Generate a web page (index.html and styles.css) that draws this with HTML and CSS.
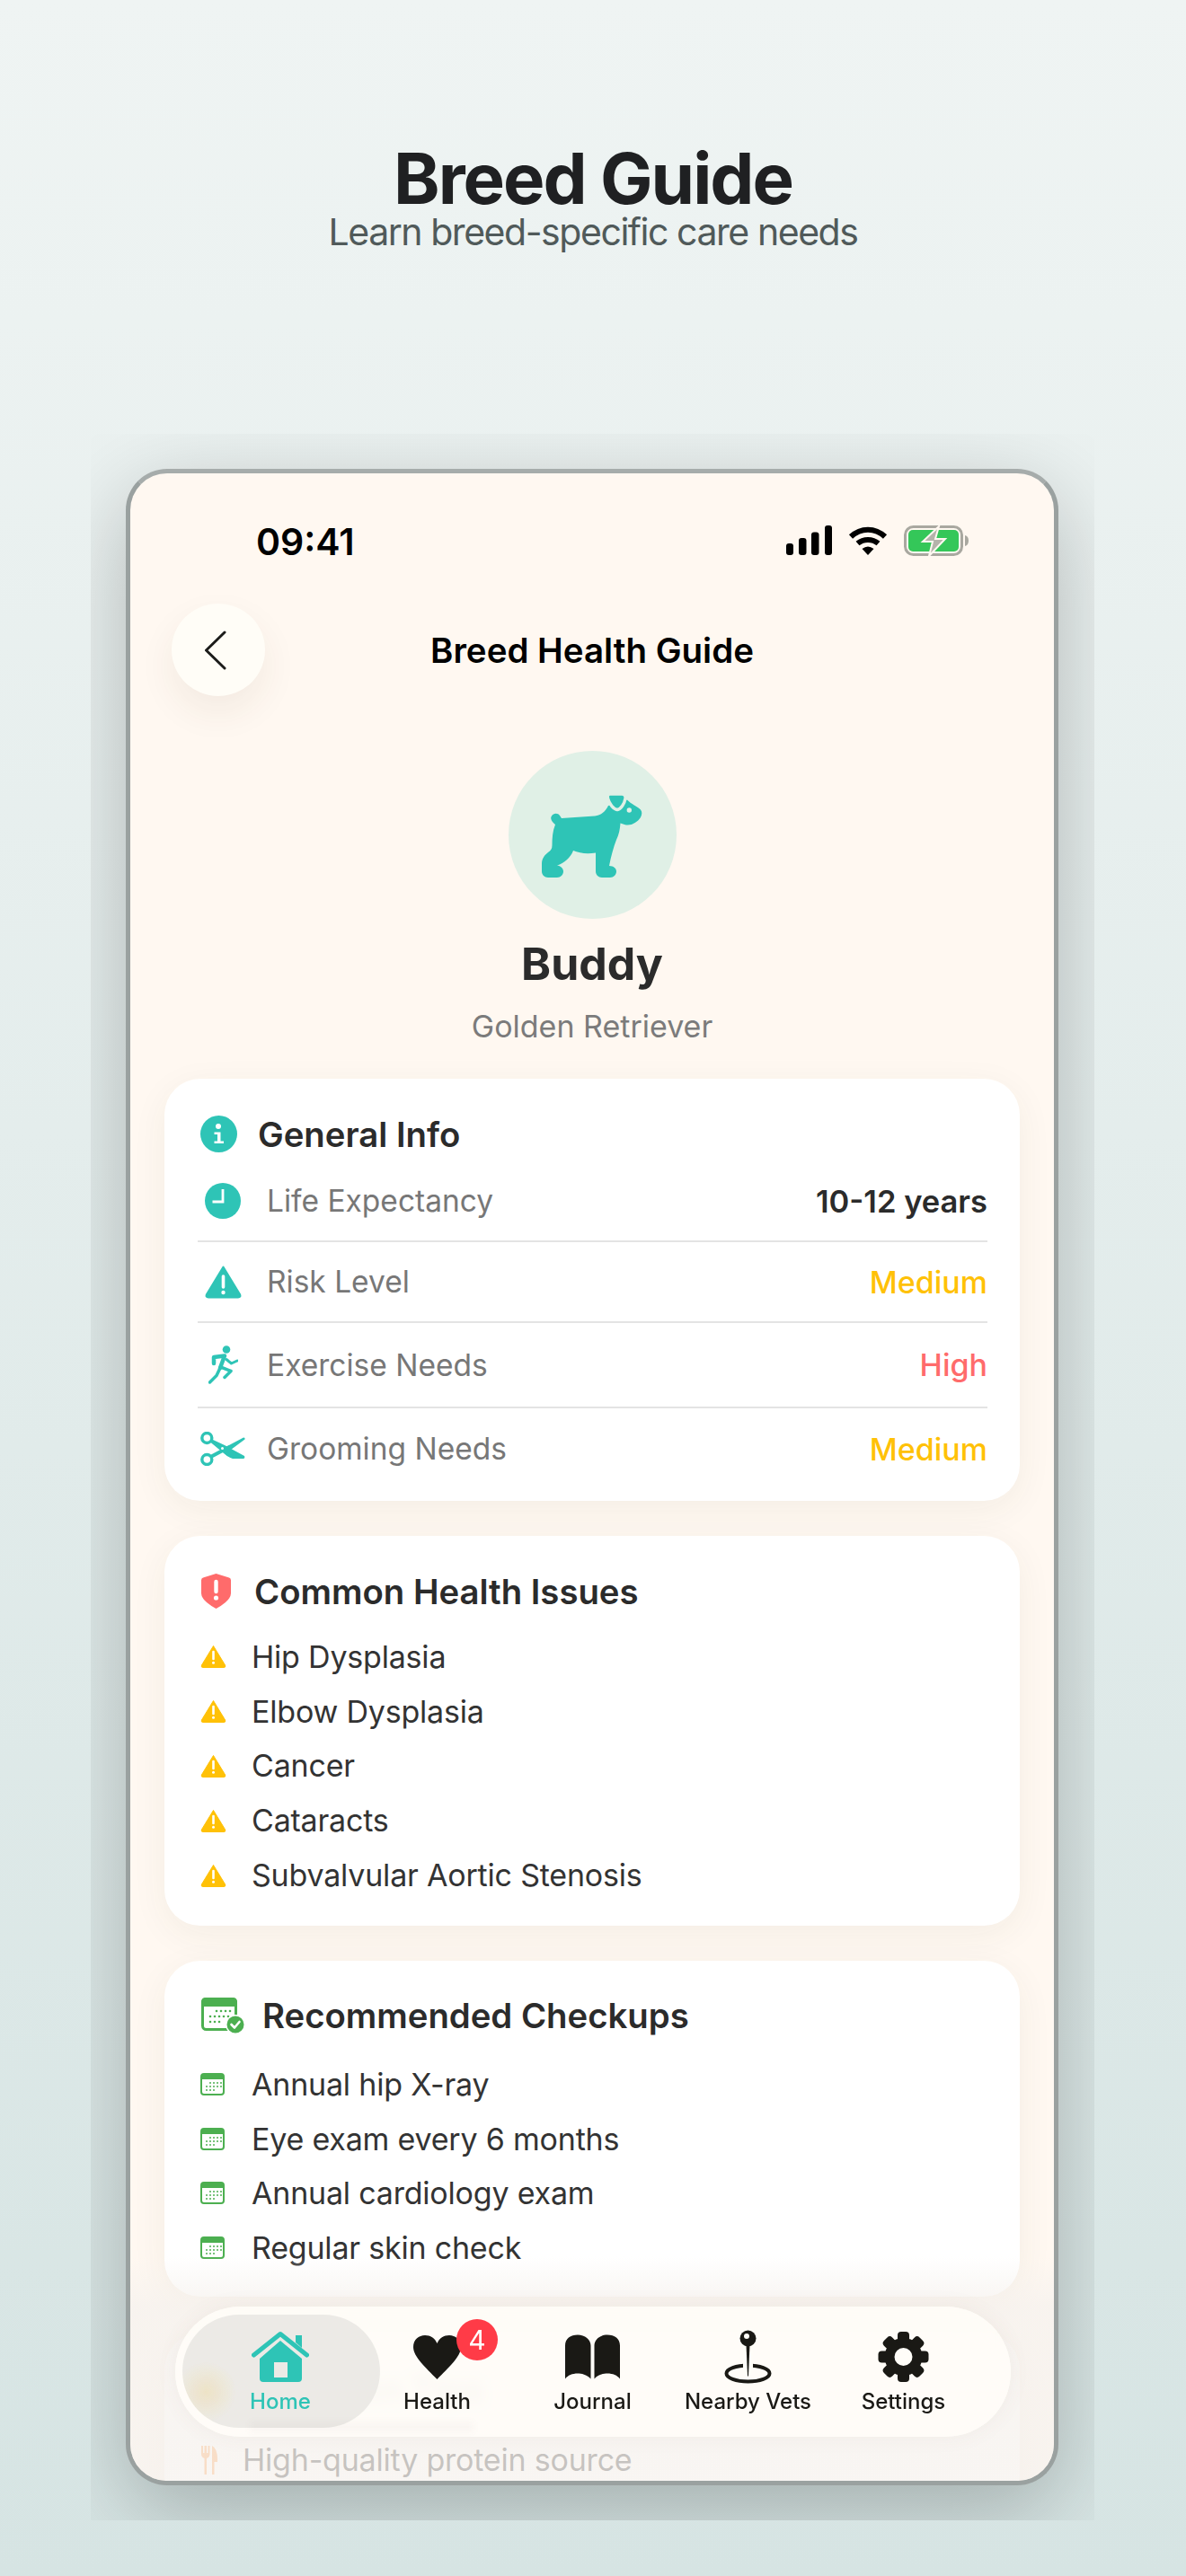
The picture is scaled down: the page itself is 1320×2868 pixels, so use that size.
FILE: index.html
```html
<!DOCTYPE html>
<html lang="en">

<head>
  <meta charset="UTF-8">
  <meta name="viewport" content="width=device-width, initial-scale=1.0">
  <title>Breed Guide</title>
  <link rel="stylesheet" href="styles.css">
</head>

<body>

  <svg class="sprite" aria-hidden="true">
    <symbol id="warn" viewBox="0 0 29 26">
      <path d="M14.5 1.5 L27.6 23 Q28.6 25.5 26 25.5 H3 Q.4 25.5 1.4 23 Z" fill="#ffc107" stroke="#ffc107" stroke-linejoin="round" />
      <path d="M14.5 8 V16" stroke="#fff" stroke-width="2.6" stroke-linecap="round" />
      <circle cx="14.5" cy="20.3" r="1.5" fill="#fff" />
    </symbol>
    <symbol id="cal" viewBox="0 0 27 25">
      <rect x="1" y="1" width="25" height="23" rx="3" fill="#fff" stroke="#4caf50" stroke-width="2" />
      <path d="M1 7 V4 Q1 1 4 1 H23 Q26 1 26 4 V7 Z" fill="#4caf50" />
      <g fill="#4caf50">
        <circle cx="11" cy="11" r="1" /><circle cx="15" cy="11" r="1" /><circle cx="19" cy="11" r="1" /><circle cx="23" cy="11" r="1" />
        <circle cx="7" cy="15" r="1" /><circle cx="11" cy="15" r="1" /><circle cx="15" cy="15" r="1" /><circle cx="19" cy="15" r="1" /><circle cx="23" cy="15" r="1" />
        <circle cx="7" cy="19" r="1" /><circle cx="11" cy="19" r="1" /><circle cx="15" cy="19" r="1" />
      </g>
    </symbol>
  </svg>

  <header class="page-head">
    <h1>Breed Guide</h1>
    <p>Learn breed-specific care needs</p>
  </header>

  <div class="stage">
    <div class="phone">

      <div class="status">
        <span class="time">09:41</span>
        <div class="status-icons">
          <svg width="51" height="33" viewBox="0 0 51 33">
            <rect x="0" y="20" width="8" height="13" rx="3" />
            <rect x="14" y="14" width="8.500" height="19" rx="3" />
            <rect x="28" y="7.500" width="8.500" height="25.500" rx="3" />
            <rect x="43" y="0" width="8" height="33" rx="3" />
          </svg>
          <svg width="44" height="33" viewBox="0 0 44 33">
            <path d="M3 12.500 C14 2,30 2,41 12.500" fill="none" stroke="#000" stroke-width="6" />
            <path d="M10.500 20 C17 14.500,27 14.500,33.500 20" fill="none" stroke="#000" stroke-width="6" />
            <path d="M15.500 26 Q22 21 28.500 26 L22 33 Z" />
          </svg>
          <svg width="73" height="34" viewBox="0 0 73 34">
            <rect x="1.500" y="1.500" width="63" height="31" rx="9" fill="none" stroke="#a9a8a0" stroke-width="3" />
            <rect x="5" y="5" width="56" height="24" rx="5" fill="#34c759" />
            <path d="M68 11 Q72 12 72 17 Q72 22 68 23 Z" fill="#a9a8a0" />
            <path d="M39 1 L21 18 H32 L28 34 L46 15 H35 Z" fill="#b5b3ab" stroke="#fff8f1" stroke-width="2" />
          </svg>
        </div>
      </div>

      <div class="topbar">
        <button class="back" aria-label="Back">
          <svg width="25" height="44" viewBox="0 0 25 44">
            <path d="M23 2 L2.500 22 L23 42" fill="none" stroke="#1c1c1a" stroke-width="3" stroke-linecap="round" stroke-linejoin="round" />
          </svg>
        </button>
        <h2>Breed Health Guide</h2>
      </div>

      <div class="pet">
        <div class="avatar">
          <svg width="112" height="94" viewBox="0 0 112 94">
            <path fill="#2ec4b6" d="M15 35 C11 32,9 28,11 25.500 C13 22,18 22,20 25 L22 28 L59 25.500 C66 25,71 20,74 14 L95 7.500 C99 12,107 15,110 18.500 C112 21,111.500 24,110 27 C106 33,99 37,92 35 L87.500 33.500 C87 40,86 46,83 52 C80 60,77 70,75 81 C80 81,83 84,83 87 C83 91,80 94,76 94 H67 C63 94,60 91,60 87 V66.500 C50 68,42 67,35 64 C32 72,25 78,17 80.500 C21 81,24 84,24 87 C24 91,21 94,17 94 H7 C3 94,0 91,0 87 V79 C0 73,3 69,7 66 C10 64,11.500 62,11.500 58 C11.500 50,12 42,15 35 Z" />
            <path fill="#2ec4b6" stroke="#e0f0e6" stroke-width="3.500" d="M76 1 H89 C92 1,93.500 3,93 6 C92 12,88 18,84 18.500 C80 18,75 12,73.500 6 C73 3,73.500 1,76 1 Z" />
            <circle cx="97.300" cy="19" r="2.700" fill="#e0f0e6" />
          </svg>
        </div>
        <h3>Buddy</h3>
        <p>Golden Retriever</p>
      </div>

      <div class="cards">

        <section class="card">
          <div class="card-head gap-info">
            <svg width="41" height="41" viewBox="0 0 41 41">
              <circle cx="20.500" cy="20.500" r="20.500" fill="#2ec4b6" />
              <circle cx="20" cy="12" r="3" fill="#fff" />
              <path d="M15.500 18.500 H22.500 V28.500 H26 V31 H15.500 V28.500 H19 V21 H15.500 Z" fill="#fff" />
            </svg>
            <h4>General Info</h4>
          </div>
          <div class="info-row">
            <span class="row-icon">
              <svg width="40" height="40" viewBox="0 0 40 40">
                <circle cx="20" cy="20" r="20" fill="#2ec4b6" />
                <path d="M20 7 V21 H8.500" fill="none" stroke="#fff" stroke-width="2.800" />
              </svg>
            </span>
            <span class="row-label">Life Expectancy</span>
            <span class="row-value">10-12 years</span>
          </div>
          <div class="info-row">
            <span class="row-icon">
              <svg width="41" height="37" viewBox="0 0 41 37">
                <path d="M20.500 1.500 L39 32 Q40.500 35.500 37 35.500 H4 Q.5 35.500 2 32 Z" fill="#2ec4b6" stroke="#2ec4b6" stroke-width="2" stroke-linejoin="round" />
                <path d="M20.500 12 V24" stroke="#fff" stroke-width="3.600" stroke-linecap="round" />
                <circle cx="20.500" cy="30" r="2.200" fill="#fff" />
              </svg>
            </span>
            <span class="row-label">Risk Level</span>
            <span class="row-value is-medium">Medium</span>
          </div>
          <div class="info-row row-tall">
            <span class="row-icon">
              <svg width="33" height="43" viewBox="0 0 33 43">
                <circle cx="20" cy="4.500" r="4.300" fill="#2ec4b6" />
                <g fill="none" stroke="#2ec4b6" stroke-linecap="round" stroke-linejoin="round">
                  <path d="M6 20 V13 L18 11.500 L13 25" stroke-width="4.500" />
                  <path d="M20 15.500 L25.500 20 L32 17" stroke-width="3" />
                  <path d="M13 25 L9 33.500 L1.500 41" stroke-width="3.500" />
                  <path d="M13.500 24 L25 28.500 L18 35.500" stroke-width="3.500" />
                </g>
              </svg>
            </span>
            <span class="row-label">Exercise Needs</span>
            <span class="row-value is-high">High</span>
          </div>
          <div class="info-row">
            <span class="row-icon">
              <svg width="50" height="38" viewBox="0 0 50 38">
                <circle cx="7.300" cy="7" r="5.500" fill="none" stroke="#2ec4b6" stroke-width="3.400" />
                <circle cx="7.300" cy="31" r="5.500" fill="none" stroke="#2ec4b6" stroke-width="3.400" />
                <path fill="#2ec4b6" d="M11 26 L26 18 L48 6.500 Q50 6.500 49.500 8.500 L34 20 Q30 22 27 22 L13 29.500 Z" />
                <path fill="#2ec4b6" d="M11 11.500 L13 8.500 L27 15 L49 27 Q50 29.500 48 30 L36 30 Q30 28 26 24 Z" />
                <circle cx="24.500" cy="18.500" r="1.500" fill="#fff" />
              </svg>
            </span>
            <span class="row-label">Grooming Needs</span>
            <span class="row-value is-medium">Medium</span>
          </div>
        </section>

        <section class="card card-list card-issues">
          <div class="card-head gap-issues">
            <svg width="33" height="39" viewBox="0 0 33 39">
              <path d="M16.500 0 L31 4.500 Q33 5 33 7.500 V22 Q33 30 16.500 39 Q0 30 0 22 V7.500 Q0 5 2 4.500 Z" fill="#ff6b6b" />
              <path d="M16.500 9 V20" stroke="#fff" stroke-width="4.400" stroke-linecap="round" />
              <circle cx="16.500" cy="27" r="2.600" fill="#fff" />
            </svg>
            <h4>Common Health Issues</h4>
          </div>
          <ul class="list">
            <li><svg class="li-warn"><use href="#warn" /></svg>Hip Dysplasia</li>
            <li><svg class="li-warn"><use href="#warn" /></svg>Elbow Dysplasia</li>
            <li><svg class="li-warn"><use href="#warn" /></svg>Cancer</li>
            <li><svg class="li-warn"><use href="#warn" /></svg>Cataracts</li>
            <li><svg class="li-warn"><use href="#warn" /></svg>Subvalvular Aortic Stenosis</li>
          </ul>
        </section>

        <section class="card card-list card-checkups">
          <div class="card-head gap-checkups">
            <svg width="49" height="41" viewBox="0 0 49 41">
              <rect x="1.500" y="1.500" width="37" height="34" rx="4" fill="#fff" stroke="#4caf50" stroke-width="3" />
              <path d="M0 10 V5 Q0 0 5 0 H35 Q40 0 40 5 V10 Z" fill="#4caf50" />
              <g fill="#4caf50">
                <circle cx="17" cy="15" r="1.300" /><circle cx="22" cy="15" r="1.300" /><circle cx="27" cy="15" r="1.300" /><circle cx="32" cy="15" r="1.300" />
                <circle cx="10" cy="21" r="1.300" /><circle cx="15" cy="21" r="1.300" /><circle cx="20" cy="21" r="1.300" /><circle cx="25" cy="21" r="1.300" /><circle cx="30" cy="21" r="1.300" />
                <circle cx="10" cy="27" r="1.300" /><circle cx="15" cy="27" r="1.300" /><circle cx="20" cy="27" r="1.300" />
              </g>
              <circle cx="38" cy="30" r="11" fill="#fff" />
              <circle cx="38" cy="30" r="9.500" fill="#4caf50" />
              <path d="M33.500 30 L37 33.500 L42.500 27" fill="none" stroke="#fff" stroke-width="2.600" stroke-linecap="round" stroke-linejoin="round" />
            </svg>
            <h4>Recommended Checkups</h4>
          </div>
          <ul class="list">
            <li><svg class="li-cal"><use href="#cal" /></svg>Annual hip X-ray</li>
            <li><svg class="li-cal"><use href="#cal" /></svg>Eye exam every 6 months</li>
            <li><svg class="li-cal"><use href="#cal" /></svg>Annual cardiology exam</li>
            <li><svg class="li-cal"><use href="#cal" /></svg>Regular skin check</li>
          </ul>
        </section>

        <section class="card card-list card-nutrition">
          <div class="card-head gap-issues">
            <svg width="36" height="41" viewBox="0 0 36 41">
              <path d="M4 0 H32 Q36 0 36 4 V30 L18 41 L0 30 V4 Q0 0 4 0 Z" fill="#ffc107" />
            </svg>
            <h4>Nutrition Tips</h4>
          </div>
          <ul class="list">
            <li>
              <svg class="li-food" viewBox="0 0 19 32">
                <path d="M1 0 V9 Q1 13 4.500 14 V32 H7 V14 Q10.500 13 10.500 9 V0 H8.500 V8 H7 V0 H4.500 V8 H3 V0 Z" fill="#ff9f50" />
                <path d="M13 32 V0 Q19 3 19 15 V18 H15.500 V32 Z" fill="#ff9f50" />
              </svg>High-quality protein source
            </li>
          </ul>
        </section>

      </div>

      <div class="fade"></div>

      <nav class="tabbar">
        <div class="tab-pill"></div>
        <a class="tab is-active">
          <svg width="64" height="56" viewBox="0 0 64 56">
            <path d="M49 4 H56 V18 L49 12 Z" fill="#2ec4b6" />
            <path d="M32 10 L56 30 V52 Q56 56 52 56 H13 Q9 56 9 52 V30 Z M25 34 V51 H40 V34 Z" fill="#2ec4b6" fill-rule="evenodd" />
            <path d="M2.500 26 L32 2.500 L61.500 26" fill="none" stroke="#2ec4b6" stroke-width="5" stroke-linecap="round" stroke-linejoin="round" />
          </svg>
          <span>Home</span>
        </a>
        <a class="tab">
          <span class="tab-health">
            <svg width="53" height="49" viewBox="0 0 53 49">
              <path d="M26.500 49 C14 36,0 24,0 13 C0 5,6 0,13 0 C19 0,24 3,26.500 9 C29 3,34 0,40 0 C47 0,53 5,53 13 C53 24,39 36,26.500 49 Z" fill="#1a1915" />
            </svg>
            <b class="badge">4</b>
          </span>
          <span>Health</span>
        </a>
        <a class="tab">
          <svg width="61" height="49" viewBox="0 0 61 49">
            <path d="M0 12 C0 4,6 0,14 0 C22 0,28.500 5,28.500 12 V49 C24 44,18 43,14 43 C8 43,3 45,0 49 Z" fill="#1a1915" />
            <path d="M61 12 C61 4,55 0,47 0 C39 0,32.500 5,32.500 12 V49 C37 44,43 43,47 43 C53 43,58 45,61 49 Z" fill="#1a1915" />
          </svg>
          <span>Journal</span>
        </a>
        <a class="tab">
          <svg width="53" height="59" viewBox="0 0 53 59">
            <ellipse cx="26.500" cy="48" rx="24" ry="9" fill="none" stroke="#1a1915" stroke-width="4" />
            <path d="M26.500 14 V49" stroke="#fffdf8" stroke-width="11" />
            <path d="M24.500 16 H28.500 L27 51 H26 Z" fill="#1a1915" />
            <circle cx="26.500" cy="9" r="9" fill="#1a1915" />
            <circle cx="25" cy="6.500" r="3" fill="#fffdf8" />
          </svg>
          <span>Nearby Vets</span>
        </a>
        <a class="tab">
          <svg width="57" height="56" viewBox="0 0 57 56">
            <g fill="#1a1915">
              <circle cx="28.500" cy="28" r="21" />
              <rect x="22" y="0" width="13" height="56" rx="4" />
              <rect x="22" y="0" width="13" height="56" rx="4" transform="rotate(45 28.500 28)" />
              <rect x="22" y="0" width="13" height="56" rx="4" transform="rotate(90 28.500 28)" />
              <rect x="22" y="0" width="13" height="56" rx="4" transform="rotate(135 28.500 28)" />
            </g>
            <circle cx="28.500" cy="28" r="10" fill="#fffdf8" />
          </svg>
          <span>Settings</span>
        </a>
      </nav>

    </div>
  </div>

</body>

</html>
```

FILE: styles.css
```css
* {
  box-sizing: border-box;
}

body {
  margin: 0;
  width: 1320px;
  height: 2868px;
  overflow: hidden;
  font-family: Inter, "Noto Sans", sans-serif;
  background: linear-gradient(180deg, #eff4f3 0%, #d6e4e3 100%);
  color: #333;
}

h1, h2, h3, h4, p, ul {
  margin: 0;
  padding: 0;
}

.sprite {
  position: absolute;
  width: 0;
  height: 0;
}

/* Page title */
.page-head {
  height: 483px;
  padding-top: 160px;
  text-align: center;
}

.page-head h1 {
  font-size: 78px;
  line-height: 77px;
  font-weight: 700;
  letter-spacing: -2px;
  color: #1f2022;
}

.page-head p {
  font-size: 41px;
  line-height: 42px;
  letter-spacing: -1.45px;
  color: #505a5a;
}

/* The shadow is cut off by this box, same as in the screenshot */
.stage {
  width: 1117px;
  height: 2323px;
  margin-left: 101px;
  padding: 39px 40px 39px 39px;
  overflow: hidden;
}

.phone {
  position: relative;
  height: 2245px;
  border: 5px solid #9aa1a0;
  border-top-color: #a6acab;
  border-radius: 46px;
  background: #fff8f1;
  overflow: hidden;
  box-shadow: 0 30px 100px rgba(0, 0, 0, 0.24);
}

.status {
  height: 145px;
  display: flex;
  justify-content: space-between;
  align-items: flex-start;
  padding: 56px 94px 0 140px;
}

.time {
  font-size: 41px;
  line-height: 40px;
  font-weight: 600;
  color: #000;
}

.status-icons {
  display: flex;
  gap: 18px;
  margin-top: 2px;
}

.topbar {
  display: grid;
  grid-template-columns: 104px 1fr 104px;
  align-items: center;
  padding: 0 46px;
  height: 103px;
}

.back {
  width: 104px;
  height: 103px;
  border: none;
  border-radius: 50%;
  background: #fffdf7;
  box-shadow: 0 18px 40px rgba(80, 60, 30, 0.07);
  display: flex;
  align-items: center;
  justify-content: center;
  padding: 0 8px 0 0;
}

.topbar h2 {
  text-align: center;
  font-size: 38.500px;
  font-weight: 600;
  color: #000;
}

.pet {
  margin-top: 61px;
  display: flex;
  flex-direction: column;
  align-items: center;
}

.avatar {
  width: 187px;
  height: 187px;
  border-radius: 50%;
  background: #e0f0e6;
  display: flex;
  align-items: center;
  justify-content: center;
}

.pet h3 {
  margin-top: 20px;
  font-size: 50px;
  line-height: 60px;
  font-weight: 700;
  color: #2b2b2b;
}

.pet p {
  margin-top: 18px;
  font-size: 34px;
  line-height: 44px;
  color: #7b7b7b;
}

.cards {
  margin-top: 36px;
  padding: 0 38px;
  display: flex;
  flex-direction: column;
  gap: 39px;
}

.card {
  background: #fff;
  border-radius: 40px;
  padding: 41px 36px 13px 40px;
  box-shadow: 0 10px 40px rgba(70, 60, 30, 0.06);
}

.card-head {
  display: flex;
  align-items: center;
  height: 41px;
}

.card-head h4 {
  font-size: 38.300px;
  font-weight: 600;
  color: #2b2b2b;
}

.gap-info {
  gap: 23px;
}

.gap-issues {
  gap: 26px;
  margin-left: 1px;
}

.gap-checkups {
  gap: 19px;
  margin-left: 1px;
}

/* General info rows */
.info-row {
  display: flex;
  align-items: center;
  gap: 21px;
  height: 90px;
  margin-left: -3px;
  border-bottom: 2px solid #e4e4e4;
}

.card-head + .info-row {
  margin-top: 10px;
}

.info-row:last-child {
  border-bottom: none;
}

.row-tall {
  height: 95px;
}

.row-icon {
  width: 56px;
  display: flex;
  justify-content: center;
}

.row-label {
  flex: 1;
  font-size: 33.500px;
  color: #777;
}

.row-value {
  font-size: 34.500px;
  font-weight: 600;
  color: #2b2b2b;
}

.is-medium,
.is-high {
  font-size: 34px;
  font-weight: 500;
}

.is-medium {
  color: #ffc107;
}

.is-high {
  color: #ff6b6b;
}

/* Plain lists */
.card-list {
  padding-bottom: 26px;
}

.card-checkups {
  padding-bottom: 24px;
}

.card-nutrition {
  margin-top: 2px;
}

.list {
  list-style: none;
  margin-top: 22px;
}

.card-checkups .list {
  margin-top: 25px;
}

.card-nutrition .list {
  margin-top: 28px;
}

.list li {
  display: flex;
  align-items: center;
  height: 60.800px;
  font-size: 34px;
  letter-spacing: -0.2px;
  color: #333;
}

.li-warn {
  width: 29px;
  height: 26px;
  margin-right: 28px;
}

.li-cal {
  width: 27px;
  height: 25px;
  margin-right: 30px;
}

.li-food {
  width: 19px;
  height: 32px;
  margin-right: 28px;
}

/* Content washing out under the tab bar */
.fade {
  position: absolute;
  left: 0;
  right: 0;
  bottom: 0;
  height: 250px;
  background: linear-gradient(180deg, rgba(246, 242, 238, 0) 0%, rgba(246, 242, 238, 0.8) 22%, rgba(246, 242, 238, 0.75) 100%);
}

.tabbar {
  position: absolute;
  left: 50px;
  bottom: 49px;
  width: 930px;
  height: 145px;
  padding: 26px 33px 0 32px;
  display: grid;
  grid-template-columns: repeat(5, 173px);
  border-radius: 72px;
  background: rgba(255, 253, 248, 0.88);
  backdrop-filter: blur(7px);
  box-shadow: 0 0 24px rgba(120, 90, 60, 0.06);
}

/* Soft smear of the heading along the lower edge of the glass */
.tabbar::after {
  content: "";
  position: absolute;
  left: 83px;
  top: 128px;
  width: 249px;
  height: 12px;
  background: rgba(90, 70, 50, 0.03);
  filter: blur(3px);
}

/* Yellow blob is the card icon seen through the glass */
.tab-pill {
  position: absolute;
  left: 8px;
  top: 9px;
  width: 220px;
  height: 126px;
  border-radius: 63px;
  background:
    radial-gradient(ellipse 34px 34px at 26px 86px, rgba(240, 205, 120, 0.28), rgba(240, 205, 120, 0)),
    rgba(232, 231, 226, 0.82);
}

.tab {
  position: relative;
  display: flex;
  flex-direction: column;
  align-items: center;
  justify-content: flex-start;
  color: #1a1915;
  font-size: 24px;
  font-weight: 500;
  line-height: 28px;
}

.tab svg {
  display: block;
}

.tab > svg,
.tab-health {
  height: 60px;
  margin-bottom: 6px;
}

.tab-health {
  position: relative;
  display: flex;
  align-items: center;
}

.is-active {
  color: #2ec4b6;
  margin-left: -3px;
}

.badge {
  position: absolute;
  left: 48px;
  top: -12px;
  width: 46px;
  height: 46px;
  border-radius: 50%;
  background: #ff3b47;
  color: #fff;
  font-size: 30px;
  line-height: 46px;
  font-weight: 400;
  text-align: center;
}
```
